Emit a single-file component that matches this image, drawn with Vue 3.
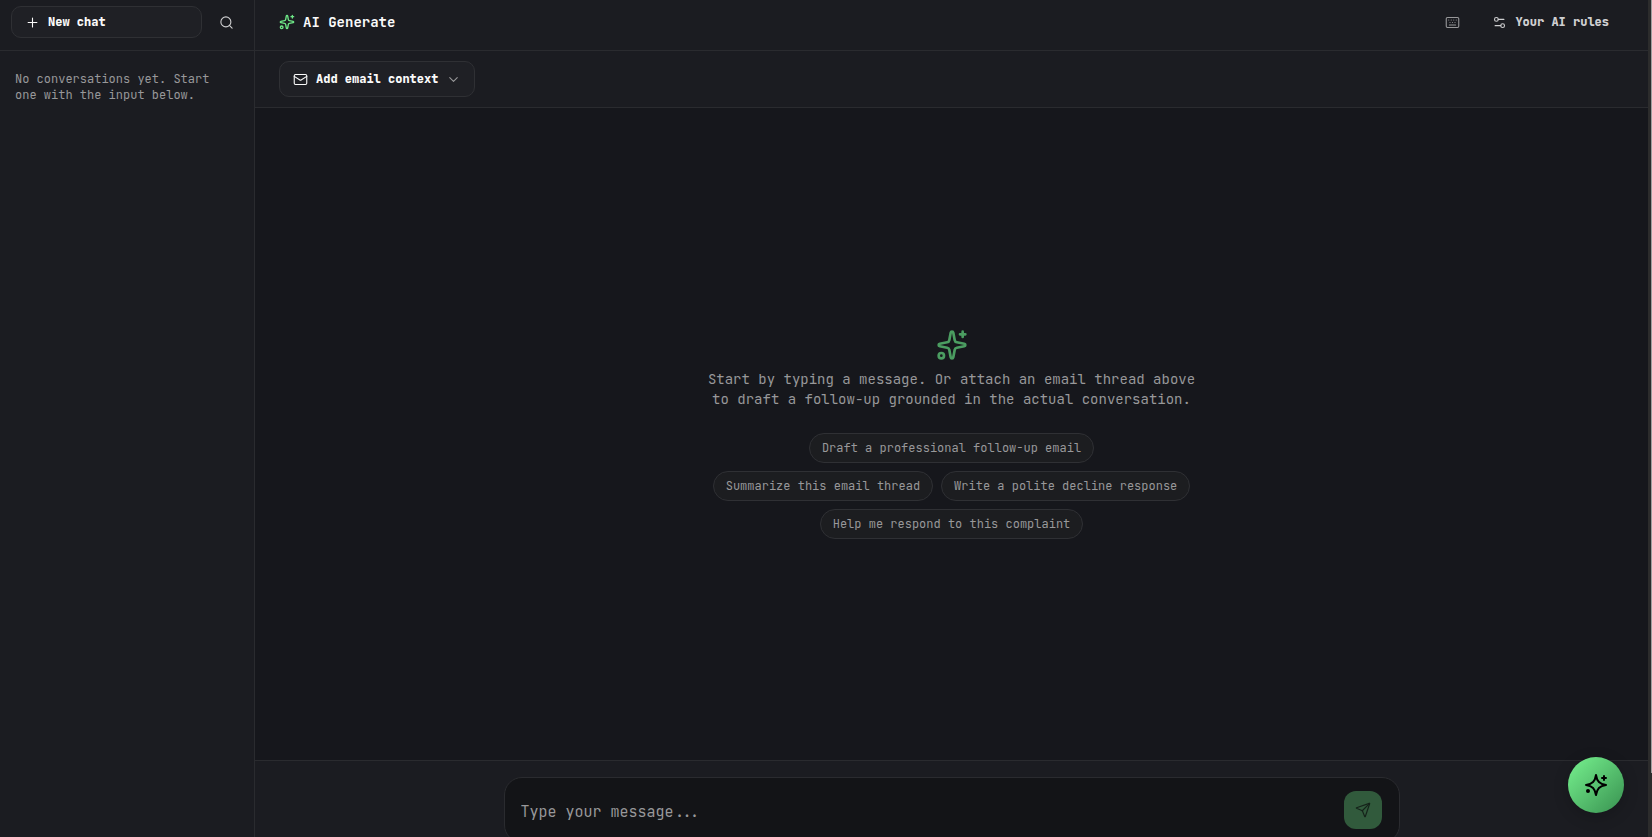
<script setup>
import { ref } from 'vue'

const message = ref('')

const suggestions = [
  'Draft a professional follow-up email',
  'Summarize this email thread',
  'Write a polite decline response',
  'Help me respond to this complaint'
]

const useSuggestion = (text) => {
  message.value = text
}
</script>

<template>
  <div class="app-shell">
    <div class="workspace">
      <!-- Conversations -->
      <aside class="sidebar">
        <div class="sidebar-header">
          <button type="button" class="new-chat-btn">
            <svg class="icon icon-sm" viewBox="0 0 24 24">
              <path d="M5 12h14M12 5v14" />
            </svg>
            <span>New chat</span>
          </button>
          <button type="button" class="icon-btn" aria-label="Search conversations">
            <svg class="icon icon-sm" viewBox="0 0 24 24">
              <circle cx="11" cy="11" r="8" />
              <path d="m21 21-4.340-4.340" />
            </svg>
          </button>
        </div>
        <p class="sidebar-empty">No conversations yet. Start one with the input below.</p>
      </aside>

      <main class="main">
        <header class="main-header">
          <h1 class="title">
            <svg class="icon icon-md accent" viewBox="0 0 24 24">
              <path d="M11.017 2.814a1 1 0 0 1 1.966 0l1.051 5.558a2 2 0 0 0 1.594 1.594l5.558 1.051a1 1 0 0 1 0 1.966l-5.558 1.051a2 2 0 0 0-1.594 1.594l-1.051 5.558a1 1 0 0 1-1.966 0l-1.051-5.558a2 2 0 0 0-1.594-1.594l-5.558-1.051a1 1 0 0 1 0-1.966l5.558-1.051a2 2 0 0 0 1.594-1.594z" />
              <path d="M20 2v4M22 4h-4" />
              <circle cx="4" cy="20" r="2" />
            </svg>
            <span>AI Generate</span>
          </h1>
          <div class="header-actions">
            <button type="button" class="icon-btn muted" aria-label="Keyboard shortcuts">
              <svg class="icon icon-sm" viewBox="0 0 24 24">
                <rect x="2" y="4" width="20" height="16" rx="2" />
                <path d="M6 8h.01M10 8h.01M14 8h.01M18 8h.01M8 12h.01M12 12h.01M16 12h.01M7 16h10" />
              </svg>
            </button>
            <button type="button" class="rules-btn">
              <svg class="icon icon-sm" viewBox="0 0 24 24">
                <circle cx="7" cy="7" r="3" />
                <path d="M10 7h9" />
                <circle cx="17" cy="17" r="3" />
                <path d="M14 17H5" />
              </svg>
              <span>Your AI rules</span>
            </button>
          </div>
        </header>

        <div class="context-bar">
          <button type="button" class="context-btn">
            <svg class="icon icon-sm" viewBox="0 0 24 24">
              <rect x="2" y="4" width="20" height="16" rx="2" />
              <path d="m22 7-8.991 5.727a2 2 0 0 1-2.009 0L2 7" />
            </svg>
            <span>Add email context</span>
            <svg class="icon icon-sm chevron" viewBox="0 0 24 24">
              <path d="m6 9 6 6 6-6" />
            </svg>
          </button>
        </div>

        <section class="empty-state">
          <svg class="icon icon-lg" viewBox="0 0 24 24">
            <path d="M11.017 2.814a1 1 0 0 1 1.966 0l1.051 5.558a2 2 0 0 0 1.594 1.594l5.558 1.051a1 1 0 0 1 0 1.966l-5.558 1.051a2 2 0 0 0-1.594 1.594l-1.051 5.558a1 1 0 0 1-1.966 0l-1.051-5.558a2 2 0 0 0-1.594-1.594l-5.558-1.051a1 1 0 0 1 0-1.966l5.558-1.051a2 2 0 0 0 1.594-1.594z" />
            <path d="M20 2v4M22 4h-4" />
            <circle cx="4" cy="20" r="2" />
          </svg>
          <p class="empty-text">
            Start by typing a message. Or attach an email thread above to draft a follow-up
            grounded in the actual conversation.
          </p>
          <div class="suggestions">
            <button
              v-for="item in suggestions"
              :key="item"
              type="button"
              class="suggestion"
              @click="useSuggestion(item)"
            >
              {{ item }}
            </button>
          </div>
        </section>

        <footer class="footer">
          <form class="composer" @submit.prevent>
            <input
              v-model="message"
              type="text"
              class="composer-input"
              placeholder="Type your message..."
              aria-label="Message"
            >
            <button type="submit" class="send-btn" aria-label="Send message">
              <svg class="icon icon-md" viewBox="0 0 24 24">
                <path d="M14.536 21.686a.5.5 0 0 0 .937-.024l6.500-19a.496.496 0 0 0-.635-.635l-19 6.500a.5.5 0 0 0-.024.937l7.930 3.180a2 2 0 0 1 1.112 1.110z" />
                <path d="m21.854 2.147-10.940 10.939" />
              </svg>
            </button>
          </form>
        </footer>
      </main>
      <div class="scroll-track">
        <div class="scroll-thumb"></div>
      </div>
    </div>

    <button type="button" class="fab" aria-label="Open AI assistant">
      <svg class="icon icon-fab" viewBox="0 0 24 24">
        <path d="M12 2 C13 8.500 15.500 11 22 12 C15.500 13 13 15.500 12 22 C11 15.500 8.500 13 2 12 C8.500 11 11 8.500 12 2z" />
        <path d="M20 3v4M22 5h-4" />
        <circle class="dot" cx="4" cy="18" r="2" />
      </svg>
    </button>
  </div>
</template>

<style>
body {
  margin: 0;
  background-color: #16171c;
}
</style>

<style scoped>
.app-shell {
  height: 100vh;
  overflow: hidden;
  background-color: #16171c;
  color: #fafafa;
  font-family: 'JetBrains Mono', 'DejaVu Sans Mono', monospace;
  font-size: 12px;
  line-height: 16px;
}

.workspace {
  display: flex;
  height: calc(100vh + 22px);
}

button,
input {
  font: inherit;
  color: inherit;
}

button {
  cursor: pointer;
}

.icon {
  flex: none;
  fill: none;
  stroke: currentColor;
  stroke-width: 1.75;
  stroke-linecap: round;
  stroke-linejoin: round;
}

.icon-sm {
  width: 15px;
  height: 15px;
}

.icon-md {
  width: 16px;
  height: 16px;
}

.icon-lg {
  width: 32px;
  height: 32px;
  color: #4b9d61;
  stroke-width: 2;
}

.accent {
  color: #6ee787;
  stroke-width: 2;
}

.sidebar {
  flex: none;
  box-sizing: border-box;
  width: 255px;
  background-color: #1b1c21;
  border-right: 1px solid #2a2b2f;
}

.sidebar-header {
  display: flex;
  gap: 8px;
  padding: 6px 12px 12px 11px;
  border-bottom: 1px solid #2a2b2f;
}

.new-chat-btn {
  flex: 1;
  display: flex;
  align-items: center;
  gap: 8px;
  height: 32px;
  padding: 0 13px;
  background-color: #1f2025;
  border: 1px solid #2f3034;
  border-radius: 10px;
  font-weight: 800;
}

.icon-btn {
  display: flex;
  align-items: center;
  justify-content: center;
  width: 32px;
  height: 32px;
  padding: 0;
  background: none;
  border: none;
  color: #d0d0d2;
}

.icon-btn.muted {
  color: #98989a;
}

.sidebar-empty {
  margin: 0;
  padding: 20px 24px 20px 15px;
  color: #98989a;
}

.main {
  flex: 1;
  display: flex;
  flex-direction: column;
  min-width: 0;
}

.main-header {
  display: flex;
  align-items: center;
  justify-content: space-between;
  padding: 6px 24px 12px;
  background-color: #1b1c21;
  border-bottom: 1px solid #2a2b2f;
}

.title {
  display: flex;
  align-items: center;
  gap: 8px;
  margin: 0;
  font-size: 14px;
  line-height: 20px;
  font-weight: 700;
}

.header-actions {
  display: flex;
  align-items: center;
  gap: 10px;
}

.rules-btn {
  display: flex;
  align-items: center;
  gap: 8px;
  height: 32px;
  padding: 0 14px 0 13px;
  background: none;
  border: 1px solid transparent;
  color: #cfcfd1;
  font-weight: 800;
}

.context-bar {
  display: flex;
  padding: 10px 24px;
  background-color: #1b1c21;
  border-bottom: 1px solid #2a2b2f;
}

.context-btn {
  display: flex;
  align-items: center;
  gap: 8px;
  height: 36px;
  padding: 0 13px;
  background-color: #1f2025;
  border: 1px solid #2f3034;
  border-radius: 10px;
  font-weight: 800;
}

.chevron {
  color: #98989a;
}

.empty-state {
  flex: 1;
  display: flex;
  flex-direction: column;
  align-items: center;
  justify-content: center;
}

.empty-text {
  max-width: 500px;
  margin: 8px 0 24px;
  color: #98989a;
  font-size: 14px;
  line-height: 20px;
  text-align: center;
}

.suggestions {
  display: flex;
  flex-wrap: wrap;
  justify-content: center;
  gap: 8px;
  max-width: 500px;
}

.suggestion {
  height: 30px;
  padding: 0 12px;
  background-color: #1c1d20;
  border: 1px solid #2f3034;
  border-radius: 15px;
  color: #98989a;
}

.footer {
  padding: 16px 24px;
  background-color: #1b1c21;
  border-top: 1px solid #2a2b2f;
}

.composer {
  display: flex;
  align-items: center;
  gap: 12px;
  box-sizing: border-box;
  max-width: 896px;
  height: 66px;
  margin: 0 auto;
  padding: 0 17px 0 16px;
  background-color: #131417;
  border: 1px solid #2a2b2f;
  border-radius: 18px;
}

.composer-input {
  flex: 1;
  min-width: 0;
  padding: 4px 0 0;
  background: none;
  border: none;
  outline: none;
  font-size: 15px;
  line-height: 24px;
}

.composer-input::placeholder {
  color: #98989a;
  opacity: 1;
}

.send-btn {
  display: flex;
  align-items: center;
  justify-content: center;
  width: 38px;
  height: 38px;
  padding: 0;
  background-color: #315a3c;
  border: none;
  border-radius: 12px;
  color: #15231a;
}

.scroll-track {
  flex: none;
  display: flex;
  justify-content: flex-end;
  width: 4px;
  background-color: #2c2c2c;
}

.scroll-thumb {
  width: 1px;
  height: 90%;
  background-color: #9f9f9f;
}

.fab {
  position: fixed;
  right: 28px;
  bottom: 24px;
  display: flex;
  align-items: center;
  justify-content: center;
  width: 56px;
  height: 56px;
  padding: 0;
  background: linear-gradient(135deg, #77f28f, #389150);
  border: none;
  border-radius: 50%;
  box-shadow: 0 4px 16px rgba(0, 0, 0, 0.2);
  color: #000;
}

.icon-fab {
  width: 24px;
  height: 24px;
  stroke-width: 2;
}

.dot {
  fill: currentColor;
  stroke: none;
}
</style>
